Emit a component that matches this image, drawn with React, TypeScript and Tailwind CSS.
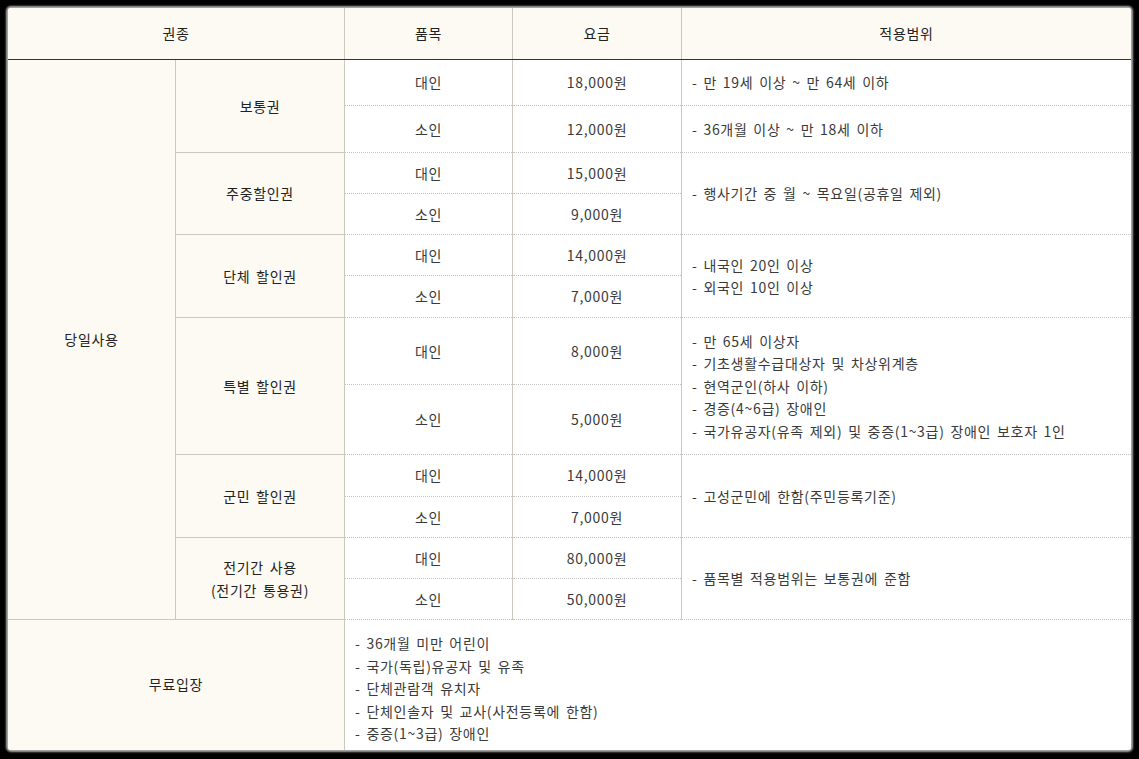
import React from "react";

const kind =
  "[border-width:1px] [border-style:solid] [border-color:#cdc8bf] bg-[#fdfaf3] text-[#222] text-center align-middle";
const cell =
  "[border-width:1px] [border-style:dotted_solid] [border-color:#c2c2c2_#cdc8bf] bg-white text-[#3a3a3a] text-center align-middle";
const desc =
  "[border-width:1px] [border-style:dotted_solid] [border-color:#c2c2c2_#cdc8bf] bg-white text-[#3a3a3a] text-left align-middle pl-[10px] leading-[22.5px]";
const head =
  "[border-width:1px] [border-style:solid] [border-color:#cdc8bf_#cdc8bf_#333_#cdc8bf] bg-[#fdfaf3] font-normal text-[#222] align-middle";

type Row = {
  name: React.ReactNode;
  a: string;
  b: string;
  ha: number;
  hb: number;
  desc: string[];
  split?: [string[], string[]];
};

const rows: Row[] = [
  { name: "보통권", a: "18,000원", b: "12,000원", ha: 46, hb: 47, desc: [], split: [["만 19세 이상 ~ 만 64세 이하"], ["36개월 이상 ~ 만 18세 이하"]] },
  { name: "주중할인권", a: "15,000원", b: "9,000원", ha: 41, hb: 41, desc: ["행사기간 중 월 ~ 목요일(공휴일 제외)"] },
  { name: "단체 할인권", a: "14,000원", b: "7,000원", ha: 41, hb: 42, desc: ["내국인 20인 이상", "외국인 10인 이상"] },
  {
    name: "특별 할인권",
    a: "8,000원",
    b: "5,000원",
    ha: 67,
    hb: 70,
    desc: [
      "만 65세 이상자",
      "기초생활수급대상자 및 차상위계층",
      "현역군인(하사 이하)",
      "경증(4~6급) 장애인",
      "국가유공자(유족 제외) 및 중증(1~3급) 장애인 보호자 1인",
    ],
  },
  { name: "군민 할인권", a: "14,000원", b: "7,000원", ha: 42, hb: 41, desc: ["고성군민에 한함(주민등록기준)"] },
  {
    name: (
      <>
        전기간 사용
        <br />
        (전기간 통용권)
      </>
    ),
    a: "80,000원",
    b: "50,000원",
    ha: 41,
    hb: 41,
    desc: ["품목별 적용범위는 보통권에 준함"],
  },
];

function Lines({ items }: { items: string[] }) {
  return (
    <>
      {items.map((t, i) => (
        <div key={i}>- {t}</div>
      ))}
    </>
  );
}

export default function App() {
  return (
    <div className="w-[1139px] h-[759px] bg-black pt-[8px] pl-[8px] font-['Noto_Sans_CJK_KR','Noto_Sans',sans-serif] text-[14px] tracking-[0.7px] [word-spacing:2px]">
      <div className="w-[1123px] h-[742px] overflow-hidden bg-white rounded-[3px] shadow-[0_0_2px_2px_rgba(190,190,190,0.9)]">
        <table className="w-[1125px] table-fixed border-collapse -mt-px -ml-px">
          <colgroup>
            <col className="w-[168px]" />
            <col className="w-[169px]" />
            <col className="w-[168px]" />
            <col className="w-[169px]" />
            <col />
          </colgroup>
          <thead>
            <tr className="h-[52px]">
              <th colSpan={2} className={head}>
                권종
              </th>
              <th className={head}>품목</th>
              <th className={head}>요금</th>
              <th className={head}>적용범위</th>
            </tr>
          </thead>
          <tbody>
            {rows.map((r, i) => (
              <React.Fragment key={i}>
                <tr style={{ height: r.ha }}>
                  {i === 0 && (
                    <td rowSpan={12} className={kind}>
                      당일사용
                    </td>
                  )}
                  <td rowSpan={2} className={`${kind} leading-[23px]`}>
                    {r.name}
                  </td>
                  <td className={cell}>대인</td>
                  <td className={cell}>{r.a}</td>
                  {r.split ? (
                    <td className={desc}>
                      <Lines items={r.split[0]} />
                    </td>
                  ) : (
                    <td rowSpan={2} className={desc}>
                      <Lines items={r.desc} />
                    </td>
                  )}
                </tr>
                <tr style={{ height: r.hb }}>
                  <td className={cell}>소인</td>
                  <td className={cell}>{r.b}</td>
                  {r.split && (
                    <td className={desc}>
                      <Lines items={r.split[1]} />
                    </td>
                  )}
                </tr>
              </React.Fragment>
            ))}
            <tr className="h-[140px]">
              <td colSpan={2} className={`${kind} pb-[10px]`}>
                무료입장
              </td>
              <td colSpan={3} className={`${desc} align-top pt-[12px]`}>
                <Lines
                  items={[
                    "36개월 미만 어린이",
                    "국가(독립)유공자 및 유족",
                    "단체관람객 유치자",
                    "단체인솔자 및 교사(사전등록에 한함)",
                    "중증(1~3급) 장애인",
                  ]}
                />
              </td>
            </tr>
          </tbody>
        </table>
      </div>
    </div>
  );
}
